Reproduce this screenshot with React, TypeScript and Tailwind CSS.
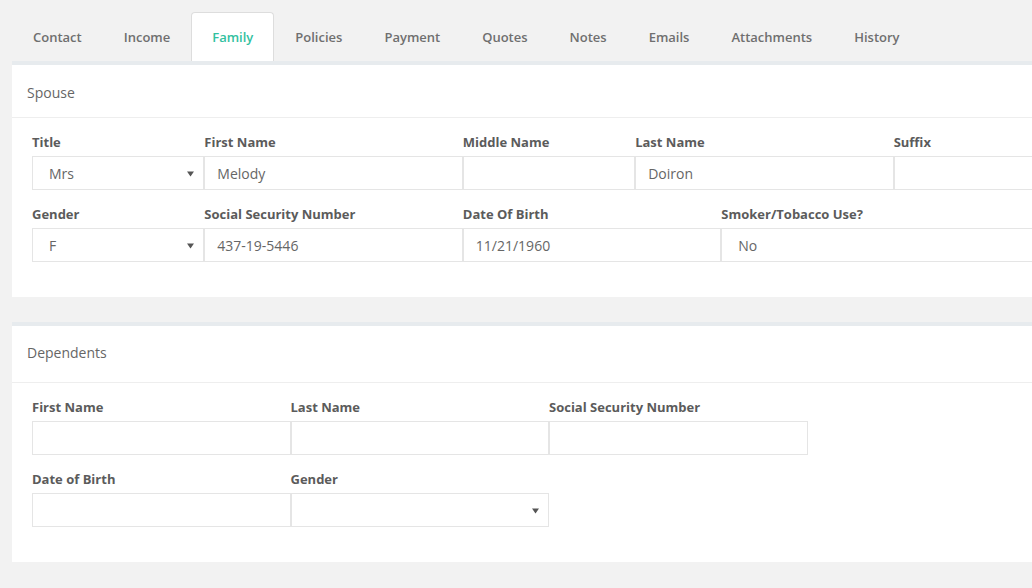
import React from "react";

type Field = { label: string; span: string; value?: string; select?: boolean };

const tabs = [
  "Contact",
  "Income",
  "Family",
  "Policies",
  "Payment",
  "Quotes",
  "Notes",
  "Emails",
  "Attachments",
  "History",
];

const Caret = () => (
  <svg width="7" height="6" viewBox="0 0 7 6" className="absolute right-[9px] top-[14px]">
    <path d="M0 0.5 H7 L3.5 5.5 Z" fill="#555" />
  </svg>
);

const Input: React.FC<{ field: Field }> = ({ field }) => (
  <div className={`${field.span} flex flex-col`}>
    <label className="text-[13px] leading-[18px] font-bold text-[#5b5b5b] mb-[5px]">
      {field.label}
    </label>
    <div
      className={`
        relative h-[34px] border border-[#e5e5e5] bg-white flex items-center
        text-[14px] text-[#666]
        ${field.select ? "pl-[16px]" : "pl-[12px]"}
      `}
    >
      {field.value}
      {field.select && <Caret />}
    </div>
  </div>
);

const Panel: React.FC<{
  title: string;
  headerClass: string;
  rows: Field[][];
  className?: string;
}> = ({ title, headerClass, rows, className = "" }) => (
  <section className={`w-[1074px] bg-white border-t-4 border-[#e7ebee] ${className}`}>
    {/* Header */}
    <div className={`px-[15px] border-b border-[#eeeeee] text-[14px] leading-[20px] text-[#666] ${headerClass}`}>
      {title}
    </div>
    {/* Body */}
    <div className="px-[20px] pt-[15px] pb-[35px] flex flex-col gap-[15px]">
      {rows.map((row, i) => (
        <div key={i} className="grid grid-cols-12 w-[1034px]">
          {row.map((f) => (
            <Input key={f.label} field={f} />
          ))}
        </div>
      ))}
    </div>
  </section>
);

export default function App() {
  const spouse: Field[][] = [
    [
      { label: "Title", span: "col-span-2", value: "Mrs", select: true },
      { label: "First Name", span: "col-span-3", value: "Melody" },
      { label: "Middle Name", span: "col-span-2" },
      { label: "Last Name", span: "col-span-3", value: "Doiron" },
      { label: "Suffix", span: "col-span-2" },
    ],
    [
      { label: "Gender", span: "col-span-2", value: "F", select: true },
      { label: "Social Security Number", span: "col-span-3", value: "437-19-5446" },
      { label: "Date Of Birth", span: "col-span-3", value: "11/21/1960" },
      { label: "Smoker/Tobacco Use?", span: "col-span-4", value: "No", select: true },
    ],
  ];

  const dependents: Field[][] = [
    [
      { label: "First Name", span: "col-span-3" },
      { label: "Last Name", span: "col-span-3" },
      { label: "Social Security Number", span: "col-span-3" },
    ],
    [
      { label: "Date of Birth", span: "col-span-3" },
      { label: "Gender", span: "col-span-3", select: true },
    ],
  ];

  return (
    <div
      className="w-[1032px] h-[588px] overflow-hidden bg-[#f2f2f2] pl-[12px] pt-[12px]"
      style={{ fontFamily: '"Open Sans", sans-serif' }}
    >
      {/* Tabs */}
      <nav className="flex h-[49px]">
        {tabs.map((t) => {
          const active = t === "Family";
          return (
            <div
              key={t}
              className={`
                flex items-center pt-[2px] text-[13px] font-semibold
                ${
                  active
                    ? "bg-white text-[#32c19f] border border-b-0 border-[#dddddd] rounded-t-[4px] px-[20px]"
                    : "text-[#6f6f6f] px-[21px]"
                }
              `}
            >
              {t}
            </div>
          );
        })}
      </nav>

      <Panel title="Spouse" headerClass="h-[53px] pt-[18px]" rows={spouse} />
      <Panel
        title="Dependents"
        headerClass="h-[57px] pt-[17px]"
        rows={dependents}
        className="mt-[25px]"
      />
    </div>
  );
}
